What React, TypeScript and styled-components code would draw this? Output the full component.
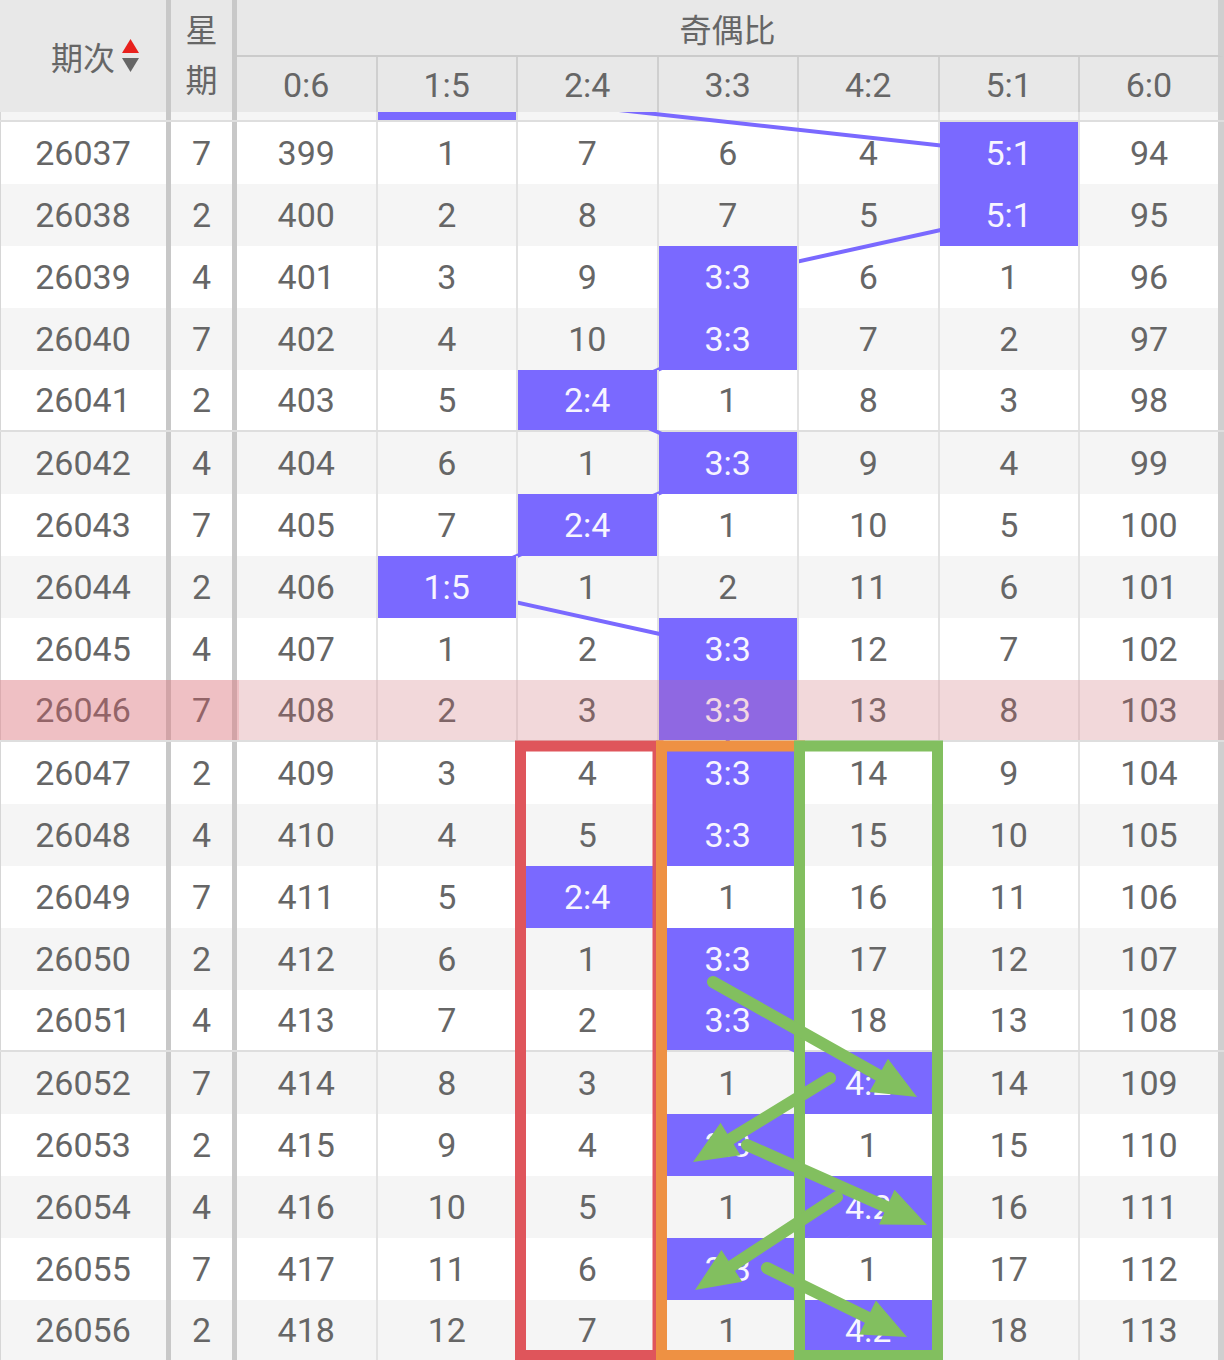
import React from 'react';
import styled, { createGlobalStyle, css } from 'styled-components';

const PURPLE = '#7a69ff';
const COLS = '171px 66px repeat(6, 140.5px) 144px';
const ROW_H = 62;
const BODY_OFFSET = -52;

const GlobalStyle = createGlobalStyle`
  html, body { margin: 0; padding: 0; background: #fff; overflow: hidden; }
  body { font-family: Roboto, "Noto Sans CJK SC", sans-serif; }
`;

const Table = styled.div`
  position: relative;
  width: 1224px;
  height: 1360px;
  overflow: hidden;
  color: #666;
  font-family: Roboto, "Noto Sans CJK SC", sans-serif;
`;

const Header = styled.div`
  display: grid;
  grid-template-columns: ${COLS};
  grid-template-rows: 57px 55px;
  background: #e8e8e8;
`;

type HeadKind = 'id' | 'week' | 'group' | 'ratio' | 'last';

const HeadCell = styled.div<{ $kind: HeadKind }>`
  display: flex;
  align-items: center;
  justify-content: center;
  font-size: 34px;
  box-sizing: border-box;
  ${(p) =>
    p.$kind === 'id' &&
    css`
      grid-row: 1 / span 2;
      border-right: 5px solid #c8c8c8;
      font-size: 32px;
    `}
  ${(p) =>
    p.$kind === 'week' &&
    css`
      grid-row: 1 / span 2;
      border-right: 5px solid #c8c8c8;
      flex-direction: column;
      font-size: 32px;
      line-height: 50px;
    `}
  ${(p) =>
    p.$kind === 'group' &&
    css`
      grid-column: 3 / span 7;
      border-bottom: 2px solid #cbcbcb;
      border-right: 6px solid #cfcfcf;
      font-size: 32px;
    `}
  ${(p) => p.$kind === 'ratio' && css`border-right: 2px solid #cfcfcf;`}
  ${(p) => p.$kind === 'last' && css`border-right: 6px solid #cfcfcf;`}
`;

const IdLabel = styled.span`
  position: relative;
  display: inline-block;
`;

const SortBadge = styled.span`
  position: absolute;
  left: calc(100% + 7px);
  top: 50%;
  transform: translateY(-50%);
  display: flex;
`;

const Body = styled.div`
  position: relative;
  height: 1248px;
  overflow: hidden;
`;

const Rows = styled.div`
  margin-top: ${BODY_OFFSET}px;
`;

const Row = styled.div<{ $even: boolean; $groupEnd: boolean; $marked: boolean }>`
  display: grid;
  grid-template-columns: ${COLS};
  height: ${ROW_H}px;
  box-sizing: border-box;
  background: ${(p) => (p.$even ? '#f5f5f5' : '#fff')};
  border-bottom: ${(p) => (p.$groupEnd ? '2px solid #dedede' : '0')};
  ${(p) =>
    p.$marked &&
    css`
      position: relative;
      &::before {
        content: '';
        position: absolute;
        inset: 0;
        background: rgba(230, 100, 110, 0.2);
        z-index: 3;
      }
      &::after {
        content: '';
        position: absolute;
        top: 0;
        bottom: 0;
        left: 0;
        width: 239px;
        background: rgba(230, 100, 110, 0.2);
        z-index: 3;
      }
    `}
`;

type CellKind = 'id' | 'week' | 'data' | 'last';

const Cell = styled.div<{ $kind: CellKind; $hit?: boolean }>`
  display: flex;
  align-items: center;
  justify-content: center;
  font-size: 34px;
  box-sizing: border-box;
  border-right: ${(p) =>
    p.$kind === 'id' || p.$kind === 'week'
      ? '5px solid #c8c8c8'
      : p.$kind === 'last'
      ? '6px solid #cfcfcf'
      : '2px solid #e2e2e2'};
  ${(p) => p.$kind === 'id' && css`box-shadow: inset 1px 0 0 #d6d6d6;`}
  ${(p) =>
    p.$hit &&
    css`
      position: relative;
      z-index: 2;
      background: ${PURPLE};
      background-clip: padding-box;
      color: #f7f5ff;
    `}
`;

const LinkLayer = styled.svg`
  position: absolute;
  top: 0;
  left: 0;
  z-index: 1;
  pointer-events: none;
`;

const Annotations = styled.svg`
  position: absolute;
  top: 0;
  left: 0;
  z-index: 5;
  pointer-events: none;
`;

const RATIOS = ['0:6', '1:5', '2:4', '3:3', '4:2', '5:1', '6:0'];
const HITS = [1, 5, 5, 3, 3, 2, 3, 2, 1, 3, 3, 3, 3, 2, 3, 3, 4, 3, 4, 3, 4];
const WEEK_CYCLE = [4, 7, 2];
const FIRST_ID = 26036;

type RowData = {
  id: number;
  week: number;
  hit: number;
  values: (number | string)[];
};

const buildRows = (): RowData[] => {
  let miss = [397, 0, 5, 4, 2, 19, 92];
  return HITS.map((hit, i) => {
    miss = miss.map((v) => v + 1);
    miss[hit] = 0;
    return {
      id: FIRST_ID + i,
      week: WEEK_CYCLE[i % 3],
      hit,
      values: miss.map((v, j) => (j === hit ? RATIOS[j] : v)),
    };
  });
};

const ROWS = buildRows();

const colCenter = (j: number) => 237 + 140.5 * j + (j < 6 ? 138.5 : 138) / 2;
const rowCenter = (i: number) => BODY_OFFSET + ROW_H * i + ROW_H / 2;

const SortIcon = () => (
  <svg width="17" height="34" viewBox="0 0 17 34">
    <polygon points="8.5,0 17,14 0,14" fill="#e8211d" />
    <polygon points="0,19 17,19 8.5,33" fill="#666" />
  </svg>
);

const ARROWS: [number, number, number, number][] = [
  [713, 982, 917, 1097],
  [830, 1078, 693, 1162],
  [747, 1145, 927, 1225],
  [837, 1197, 695, 1290],
  [767, 1268, 907, 1337],
];

const GREEN = '#82bf5f';

const Arrow = ({ a }: { a: [number, number, number, number] }) => {
  const [x1, y1, x2, y2] = a;
  const dx = x2 - x1;
  const dy = y2 - y1;
  const L = Math.hypot(dx, dy);
  const ux = dx / L;
  const uy = dy / L;
  const hl = 44;
  const hw = 19;
  const bx = x2 - ux * hl;
  const by = y2 - uy * hl;
  const px = -uy;
  const py = ux;
  return (
    <g>
      <line
        x1={x1}
        y1={y1}
        x2={bx + ux * 6}
        y2={by + uy * 6}
        stroke={GREEN}
        strokeWidth={12}
        strokeLinecap="round"
      />
      <polygon
        points={`${x2},${y2} ${bx + px * hw},${by + py * hw} ${bx - px * hw},${by - py * hw}`}
        fill={GREEN}
      />
    </g>
  );
};

export default function App() {
  return (
    <>
      <GlobalStyle />
      <Table>
        <Header>
          <HeadCell $kind="id">
            <IdLabel>
              期次
              <SortBadge>
                <SortIcon />
              </SortBadge>
            </IdLabel>
          </HeadCell>
          <HeadCell $kind="week">
            <span>星</span>
            <span>期</span>
          </HeadCell>
          <HeadCell $kind="group">奇偶比</HeadCell>
          {RATIOS.map((r, j) => (
            <HeadCell key={r} $kind={j === 6 ? 'last' : 'ratio'}>
              {r}
            </HeadCell>
          ))}
        </Header>
        <Body>
          <LinkLayer width={1224} height={1248}>
            {ROWS.slice(1).map((row, k) => {
              const prev = ROWS[k];
              return (
                <line
                  key={row.id}
                  x1={colCenter(prev.hit)}
                  y1={rowCenter(k)}
                  x2={colCenter(row.hit)}
                  y2={rowCenter(k + 1)}
                  stroke={PURPLE}
                  strokeWidth={4}
                />
              );
            })}
          </LinkLayer>
          <Rows>
            {ROWS.map((row, i) => {
              const hidden = i === 0;
              return (
                <Row
                  key={row.id}
                  $even={row.id % 2 === 0}
                  $groupEnd={(row.id - FIRST_ID) % 5 === 0}
                  $marked={row.id === 26046}
                >
                  <Cell $kind="id">{hidden ? null : row.id}</Cell>
                  <Cell $kind="week">{hidden ? null : row.week}</Cell>
                  {row.values.map((v, j) => (
                    <Cell key={j} $kind={j === 6 ? 'last' : 'data'} $hit={j === row.hit}>
                      {hidden ? null : v}
                    </Cell>
                  ))}
                </Row>
              );
            })}
          </Rows>
        </Body>
        <Annotations width={1224} height={1360}>
          <rect x={520.5} y={746} width={137.5} height={609.5} fill="none" stroke="#df555b" strokeWidth={11} />
          <rect x={661.5} y={746} width={138} height={609.5} fill="none" stroke="#ee9143" strokeWidth={11} />
          <rect x={799.5} y={746} width={138} height={609.5} fill="none" stroke={GREEN} strokeWidth={11} />
          {ARROWS.map((a, i) => (
            <Arrow key={i} a={a} />
          ))}
        </Annotations>
      </Table>
    </>
  );
}
